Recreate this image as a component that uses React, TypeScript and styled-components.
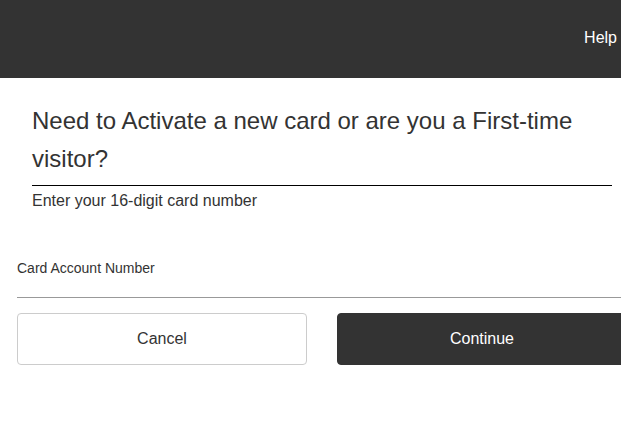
import React from "react";
import styled, { createGlobalStyle } from "styled-components";

const GlobalStyle = createGlobalStyle`
  html, body {
    margin: 0;
    padding: 0;
    background: #fff;
    overflow: hidden;
  }
  body {
    font-family: "Liberation Sans", Arial, sans-serif;
    color: #333;
  }
  * { box-sizing: border-box; }
`;

const Header = styled.header`
  height: 78px;
  background: #333333;
  display: flex;
  align-items: center;
  justify-content: flex-end;
  padding-right: 4px;
  padding-bottom: 3px;
`;

const HelpLink = styled.a`
  color: #ffffff;
  font-size: 16px;
  text-decoration: none;
`;

const Main = styled.main`
  width: 627px;
  padding-left: 17px;
  padding-top: 24px;
`;

const Intro = styled.section`
  padding: 0 15px;
`;

const Title = styled.h1`
  margin: 0;
  font-size: 24px;
  font-weight: 400;
  line-height: 38px;
  color: #333;
  padding-bottom: 7px;
  border-bottom: 1px solid #000;
`;

const Subtitle = styled.p`
  margin: 0;
  padding-top: 3px;
  font-size: 16px;
  line-height: 24px;
  color: #333;
`;

const Field = styled.div`
  margin-top: 45px;
  display: flex;
  flex-direction: column;
`;

const Label = styled.label`
  font-size: 14px;
  line-height: 20px;
  color: #333;
`;

const Input = styled.input`
  border: none;
  border-bottom: 1px solid #999;
  height: 20px;
  padding: 0;
  font-family: inherit;
  font-size: 16px;
  outline: none;
  background: transparent;
`;

const Actions = styled.div`
  display: grid;
  grid-template-columns: 290px 290px;
  column-gap: 30px;
  margin-top: 15px;
`;

const Button = styled.button<{ $primary?: boolean }>`
  height: 52px;
  border-radius: 4px;
  font-family: inherit;
  font-size: 16px;
  cursor: pointer;
  border: 1px solid ${(p) => (p.$primary ? "#333" : "#ccc")};
  background: ${(p) => (p.$primary ? "#333" : "#fff")};
  color: ${(p) => (p.$primary ? "#fff" : "#333")};
`;

export default function App() {
  return (
    <>
      <GlobalStyle />
      <Header>
        <HelpLink href="#">Help</HelpLink>
      </Header>
      <Main>
        <Intro>
          <Title>Need to Activate a new card or are you a First-time visitor?</Title>
          <Subtitle>Enter your 16-digit card number</Subtitle>
        </Intro>
        <Field>
          <Label htmlFor="card">Card Account Number</Label>
          <Input id="card" type="text" />
        </Field>
        <Actions>
          <Button type="button">Cancel</Button>
          <Button type="button" $primary>
            Continue
          </Button>
        </Actions>
      </Main>
    </>
  );
}
